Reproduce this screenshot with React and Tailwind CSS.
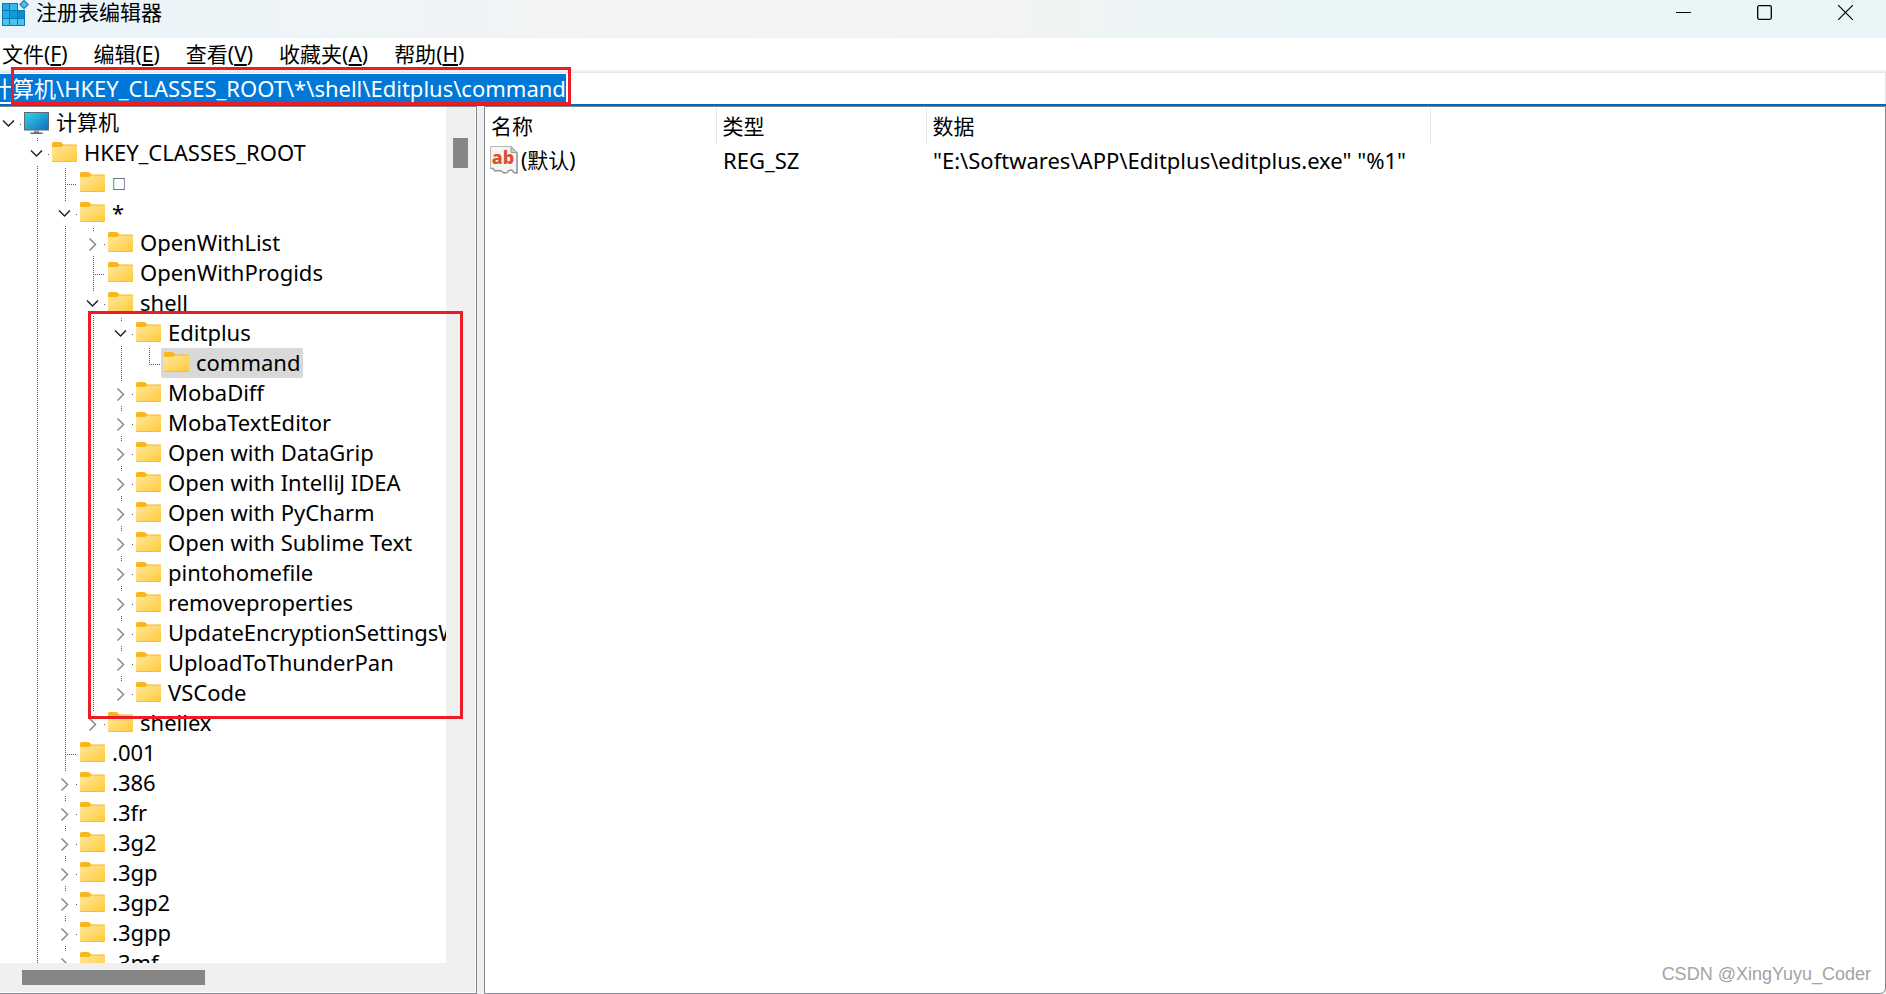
import React, { useState, useEffect, useRef } from 'react';

const tree = {
  name: '计算机',
  icon: 'computer',
  children: [
    {
      name: 'HKEY_CLASSES_ROOT',
      children: [
        { name: '□' },
        {
          name: '*',
          children: [
            { name: 'OpenWithList', closed: true },
            { name: 'OpenWithProgids' },
            {
              name: 'shell',
              children: [
                { name: 'Editplus', children: [{ name: 'command' }] },
                { name: 'MobaDiff', closed: true },
                { name: 'MobaTextEditor', closed: true },
                { name: 'Open with DataGrip', closed: true },
                { name: 'Open with IntelliJ IDEA', closed: true },
                { name: 'Open with PyCharm', closed: true },
                { name: 'Open with Sublime Text', closed: true },
                { name: 'pintohomefile', closed: true },
                { name: 'removeproperties', closed: true },
                { name: 'UpdateEncryptionSettingsW', closed: true },
                { name: 'UploadToThunderPan', closed: true },
                { name: 'VSCode', closed: true },
              ],
            },
            { name: 'shellex', closed: true },
          ],
        },
        { name: '.001' },
        { name: '.386', closed: true },
        { name: '.3fr', closed: true },
        { name: '.3g2', closed: true },
        { name: '.3gp', closed: true },
        { name: '.3gp2', closed: true },
        { name: '.3gpp', closed: true },
        { name: '.3mf', closed: true },
      ],
    },
    { name: 'HKEY_CURRENT_USER', closed: true },
  ],
};

const menus = [
  { label: '文件', hotkey: 'F' },
  { label: '编辑', hotkey: 'E' },
  { label: '查看', hotkey: 'V' },
  { label: '收藏夹', hotkey: 'A' },
  { label: '帮助', hotkey: 'H' },
];

const RegeditIcon = () => (
  <svg className="w-[30px] h-[27px] shrink-0" viewBox="0 0 30 27" aria-hidden="true">
    <path d="M2 3h16v7h7v16H2z" fill="#0a78b5" />
    <rect x="3" y="4" width="6" height="6" fill="#27a5dc" />
    <rect x="10" y="4" width="7" height="6" fill="#35b8ee" />
    <rect x="3" y="11" width="6" height="7" fill="#2aa9e4" />
    <rect x="10" y="11" width="7" height="7" fill="#0b9bdc" />
    <rect x="18" y="11" width="6" height="7" fill="#0b8fd0" />
    <rect x="3" y="19" width="6" height="6" fill="#4cc4f2" />
    <rect x="10" y="19" width="7" height="6" fill="#4cc4f2" />
    <rect x="18" y="19" width="6" height="6" fill="#4cc4f2" />
    <path d="M24 -0.500l5 5-5 5-5-5z" fill="#2b85b8" />
    <path d="M24 1.500l3 3-3 3-3-3z" fill="#5cc0ec" />
  </svg>
);

const ComputerIcon = () => (
  <svg className="w-[25px] h-[23px] shrink-0" viewBox="0 0 25 23" aria-hidden="true">
    <defs>
      <linearGradient id="screen" x1="0" y1="0" x2="1" y2="1">
        <stop offset="0" stopColor="#35d5e6" />
        <stop offset="1" stopColor="#0f6cc4" />
      </linearGradient>
    </defs>
    <rect x="0.500" y="0.500" width="24" height="17.500" fill="url(#screen)" stroke="#5f6b73" />
    <path d="M10 18.500h5v2.500h-5z" fill="#8f979c" />
    <path d="M6.500 20.500h12v1.500h-12z" fill="#5f676c" />
  </svg>
);

const FolderIcon = () => (
  <svg className="w-[25px] h-[20px] shrink-0" viewBox="0 0 25 20" aria-hidden="true">
    <defs>
      <linearGradient id="folder" x1="0" y1="0" x2="1" y2="1">
        <stop offset="0" stopColor="#ffe8a0" />
        <stop offset="1" stopColor="#ffca38" />
      </linearGradient>
    </defs>
    <path d="M0 1.500Q0 0 1.500 0H8q1 0 1.700.8L11.500 2.500H24q1 0 1 1V8H0z" fill="#f9b71c" />
    <path d="M0 5h8.500q1 0 1.700-.7l.8-.8H25V19q0 .8-.8.8H.8Q0 19.800 0 19z" fill="url(#folder)" />
    <path d="M.5 19.500h24" stroke="#e9bd55" />
  </svg>
);

const StringIcon = () => (
  <svg className="w-[28px] h-[28px] shrink-0" viewBox="0 0 28 28" aria-hidden="true">
    <path d="M.5.500H21l6 6V27l-3-.5-2-2.500-3 .5-2 2-3 .5-3-2-3-.5-3 .5-2-2.500H.5z" fill="#f5f5f5" stroke="#b8b8b8" />
    <path d="M21 .5V6.500h6z" fill="#cfcfcf" stroke="#999" />
    <path
      d="M27 7v20l-3-.5-2-2.500-3 .5-2 2-3 .5-3-2-3-.5-3 .5-2-2.500H.5"
      fill="none"
      stroke="#9a9a9a"
      strokeWidth="1.500"
    />
    <text x="13" y="18" textAnchor="middle" className="text-[18px] font-extrabold" fill="#dc4f2c">
      ab
    </text>
  </svg>
);

// one 28px step of the tree; the root step is cut to 21px by the scroll position
const Branch = ({ top, bottom, arm, open, gap, root }) => (
  <svg
    className={root ? 'w-[21px] h-[30px] shrink-0' : 'w-[28px] h-[30px] shrink-0'}
    viewBox={root ? '7 0 21 30' : '0 0 28 30'}
    fill="none"
    aria-hidden="true"
  >
    <g stroke="#5a5a5a" strokeDasharray="1 1">
      {top && <path d={gap ? 'M16.500 0v3' : 'M16.500 0v16'} />}
      {bottom && <path d={gap ? 'M16.500 28v2' : 'M16.500 16v14'} />}
      {arm && <path d="M16 16.500h12" />}
    </g>
    {gap && <path d="M27 16h1v1h-1z" fill="#5a5a5a" />}
    {gap && open && <path d="M10 12.500l5.500 5.500 5.500-5.500" stroke="#222" strokeWidth="1.500" />}
    {gap && !open && <path d="M12.500 10.500l6 6-6 6" stroke="#8a8a8a" strokeWidth="1.500" />}
  </svg>
);

const TreeNode = ({ node, guides, isLast, selected, onSelect }) => {
  const [open, setOpen] = useState(!node.closed);
  const root = guides === null;
  const hasToggle = Boolean(node.children || node.closed);
  const isSelected = selected === node.name;
  const childGuides = root ? [] : [...guides, !isLast];

  let labelSize = 'text-[22px] leading-[28px]';
  if (node.icon === 'computer') labelSize = 'text-[21px] leading-[28px]';
  if (node.name === '□') labelSize = 'text-[14px] leading-[32px]';

  return (
    <li>
      <div className="flex h-[30px]">
        {!root && <span className="w-[21px] shrink-0" />}
        {!root && guides.map((line, i) => <Branch key={i} top={line} bottom={line} />)}
        {hasToggle ? (
          <button
            type="button"
            className="flex shrink-0"
            aria-label={node.name}
            aria-expanded={open}
            onClick={() => setOpen(!open)}
          >
            <Branch gap open={open} root={root} top={!root} bottom={!root && !isLast} />
          </button>
        ) : (
          <Branch arm top bottom={!isLast} />
        )}
        <button
          type="button"
          onClick={() => onSelect(node.name)}
          className={`flex h-[30px] items-start gap-[7px] pl-[3px] pr-[3px] rounded-xs whitespace-nowrap ${isSelected ? 'bg-[#d9d9d9]' : ''}`}
        >
          <span className="pt-1">{node.icon === 'computer' ? <ComputerIcon /> : <FolderIcon />}</span>
          <span className={labelSize}>{node.name}</span>
        </button>
      </div>
      {open && node.children && (
        <ul>
          {node.children.map((child, i) => (
            <TreeNode
              key={child.name}
              node={child}
              guides={childGuides}
              isLast={i === node.children.length - 1}
              selected={selected}
              onSelect={onSelect}
            />
          ))}
        </ul>
      )}
    </li>
  );
};

const TitleBar = () => (
  <header className="flex h-[38px] shrink-0 items-start bg-linear-to-r from-[#eaf5fa] via-[#f6f3f3] via-45% to-[#e9f5f7] to-70%">
    <RegeditIcon />
    <h1 className="pl-[6px] leading-[24px]">注册表编辑器</h1>
    <div className="ml-auto flex">
      <button type="button" aria-label="最小化" className="flex w-[81px] h-[25px] items-center justify-center">
        <svg className="w-[15px] h-[15px]" viewBox="0 0 15 15" fill="none" stroke="#000">
          <path d="M0 7.500h15" />
        </svg>
      </button>
      <button type="button" aria-label="最大化" className="flex w-[81px] h-[25px] items-center justify-center">
        <svg className="w-[15px] h-[15px]" viewBox="0 0 15 15" fill="none" stroke="#000" strokeWidth="1.300">
          <rect x="0.700" y="0.700" width="13.600" height="13.600" rx="1.500" />
        </svg>
      </button>
      <button type="button" aria-label="关闭" className="flex w-[81px] h-[25px] items-center justify-center">
        <svg className="w-[15px] h-[15px]" viewBox="0 0 15 15" fill="none" stroke="#000" strokeWidth="1.200">
          <path d="M0 0l15 15M15 0L0 15" />
        </svg>
      </button>
    </div>
  </header>
);

const AddressBar = () => {
  const inputRef = useRef(null);

  useEffect(() => {
    inputRef.current.focus();
    inputRef.current.select();
  }, []);

  return (
    <div className="relative flex h-[36px] shrink-0 border-t-2 border-b-2 border-t-[#efefef] border-b-[#0067c0]">
      <input
        ref={inputRef}
        aria-label="地址"
        defaultValue="计算机\HKEY_CLASSES_ROOT\*\shell\Editplus\command"
        className="w-full border-t border-r border-[#e5e5e5] bg-white pb-[2px] -indent-[10px] text-[22px] leading-[28px] caret-transparent outline-none selection:bg-[#0078d7] selection:text-white"
      />
      <div className="pointer-events-none absolute -top-[5px] left-[11px] z-10 h-[38px] w-[560px] border-3 border-[#ed1c24]" />
    </div>
  );
};

const ValueTable = () => (
  <table className="w-full table-fixed text-left">
    <colgroup>
      <col className="w-[231px]" />
      <col className="w-[210px]" />
      <col className="w-[504px]" />
      <col />
    </colgroup>
    <thead>
      <tr className="h-[36px]">
        <th className="border-r border-[#e5e5e5] px-[6px] font-normal">名称</th>
        <th className="border-r border-[#e5e5e5] px-[6px] font-normal">类型</th>
        <th className="border-r border-[#e5e5e5] px-[6px] font-normal">数据</th>
        <th />
      </tr>
    </thead>
    <tbody>
      <tr className="h-[31px]">
        <td className="pl-[5px]">
          <div className="flex items-center gap-[3px]">
            <StringIcon />
            <span>(默认)</span>
          </div>
        </td>
        <td className="px-[7px] text-[22px]">REG_SZ</td>
        <td className="px-[7px] text-[22px] whitespace-nowrap">"E:\Softwares\APP\Editplus\editplus.exe" "%1"</td>
        <td />
      </tr>
    </tbody>
  </table>
);

const App = () => {
  const [selected, setSelected] = useState('command');

  return (
    <div className="flex h-screen flex-col overflow-hidden bg-[#f0f0f0] font-['Noto_Sans','Noto_Sans_CJK_SC',sans-serif] text-[21px] leading-[30px] text-black">
      <TitleBar />
      <nav className="flex h-[32px] shrink-0 items-center gap-[26px] bg-white pl-[2px]">
        {menus.map((menu) => (
          <button key={menu.hotkey} type="button" className="whitespace-nowrap">
            {menu.label}(<span className="underline">{menu.hotkey}</span>)
          </button>
        ))}
      </nav>
      <AddressBar />

      <main className="flex min-h-0 flex-1 gap-[7px]">
        <section className="relative flex w-[477px] shrink-0 flex-col border border-l-0 border-[#828790]">
          <div className="flex min-h-0 flex-1">
            <div className="w-[446px] overflow-hidden rounded-br-xs bg-white pt-px">
              <ul>
                <TreeNode node={tree} guides={null} isLast selected={selected} onSelect={setSelected} />
              </ul>
            </div>
            <div className="flex flex-1 justify-center border-r border-white pt-[31px]">
              <div className="h-[30px] w-[15px] bg-[#868686]" />
            </div>
          </div>
          <div className="flex h-[30px] shrink-0 items-center border-r border-b border-white pl-[22px]">
            <div className="h-[15px] w-[183px] bg-[#868686]" />
          </div>
          <div className="pointer-events-none absolute top-[204px] left-[88px] h-[408px] w-[375px] border-3 border-[#ed1c24]" />
        </section>

        <section className="relative min-w-0 flex-1 rounded-br-md border border-[#828790] bg-white pt-px">
          <ValueTable />
          <p className="absolute right-[14px] bottom-[7px] font-['Liberation_Sans',sans-serif] text-[18px] leading-[24px] text-[#a3a3a3]">
            CSDN @XingYuyu_Coder
          </p>
        </section>
      </main>
    </div>
  );
};

export default App;
